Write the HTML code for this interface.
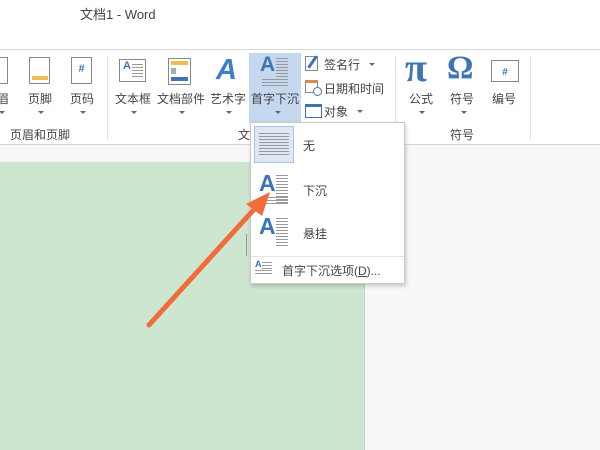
<!DOCTYPE html>
<html><head><meta charset="utf-8"><style>
*{margin:0;padding:0;box-sizing:border-box}
body{width:600px;height:450px;overflow:hidden;background:#f7f7f7;position:relative;font-family:"Liberation Sans","Noto Sans CJK SC",sans-serif;color:#444;font-size:12px}
.a{position:absolute}
.lbl{position:absolute;font-size:12px;color:#444;white-space:nowrap;transform:translateX(-50%)}
.dd{position:absolute;width:0;height:0;border-left:3px solid transparent;border-right:3px solid transparent;border-top:3px solid #666;transform:translateX(-50%)}
.sep{position:absolute;top:56px;width:1px;height:84px;background:#e2e2e2}
.lines{background:repeating-linear-gradient(#999 0 1px,transparent 1px 3px)}
</style></head><body>
<div class="a" style="left:0;top:0;width:600px;height:49px;background:#fff"></div>
<div class="a" style="left:80px;top:4px;font-size:13px;color:#444">文档1 - Word</div>
<div class="a" style="left:0;top:49px;width:600px;height:96px;background:#fff;border-top:1px solid #dadada;border-bottom:1px solid #d6d6d6"></div>

<div class="a" style="left:-12px;top:57px;width:20px;height:27px;border:1px solid #888;background:#fff"></div>
<div class="lbl" style="left:3px;top:90px">眉</div><div class="dd" style="left:2px;top:111px"></div>
<div class="a" style="left:29px;top:57px;width:21px;height:27px;border:1px solid #888;background:#fff"></div>
<div class="a" style="left:32px;top:76px;width:16px;height:4px;background:#eebb55"></div>
<div class="lbl" style="left:40px;top:90px">页脚</div><div class="dd" style="left:41px;top:111px"></div>
<div class="a" style="left:71px;top:57px;width:21px;height:27px;border:1px solid #888;background:#fff;color:#3d74b8;font-weight:bold;font-size:11px;text-align:center;line-height:22px">#</div>
<div class="lbl" style="left:82px;top:90px">页码</div><div class="dd" style="left:83px;top:111px"></div>
<div class="lbl" style="left:40px;top:126px">页眉和页脚</div>
<div class="sep" style="left:107px"></div>

<div class="a" style="left:119px;top:59px;width:27px;height:23px;border:1px solid #888;background:#fff"></div>
<div class="a" style="left:123px;top:60px;color:#3d74b8;font-weight:bold;font-size:11px">A</div>
<div class="a lines" style="left:132px;top:64px;width:11px;height:14px"></div>
<div class="lbl" style="left:133px;top:90px">文本框</div><div class="dd" style="left:134px;top:111px"></div>
<div class="a" style="left:168px;top:58px;width:23px;height:27px;border:1px solid #888;background:#fff"></div>
<div class="a" style="left:171px;top:61px;width:17px;height:4px;background:#eebb55"></div>
<div class="a" style="left:171px;top:68px;width:5px;height:6px;background:#aaa"></div>
<div class="a" style="left:171px;top:77px;width:17px;height:4px;background:#3d74b8"></div>
<div class="lbl" style="left:181px;top:90px">文档部件</div><div class="dd" style="left:182px;top:111px"></div>
<div class="a" style="left:216px;top:54px;font-size:29px;font-style:italic;font-weight:bold;color:#3d7fc6;font-family:'Liberation Sans',sans-serif">A</div>
<div class="lbl" style="left:228px;top:90px">艺术字</div><div class="dd" style="left:229px;top:111px"></div>
<div class="a" style="left:249px;top:53px;width:52px;height:70px;background:#c5d8f0"></div>
<div class="a" style="left:260px;top:53px;font-size:21px;font-weight:bold;color:#3d74b8">A</div>
<div class="a lines" style="left:276px;top:58px;width:12px;height:28px"></div>
<div class="a lines" style="left:262px;top:79px;width:26px;height:8px"></div>
<div class="lbl" style="left:275px;top:90px">首字下沉</div><div class="dd" style="left:278px;top:111px"></div>
<div class="lbl" style="left:244px;top:126px">文</div>
<div class="a" style="left:305px;top:56px;width:13px;height:15px;border:1px solid #888;background:#fff"></div>
<div class="a" style="left:311px;top:55px;width:3px;height:14px;background:#3d74b8;transform:rotate(35deg)"></div>
<div class="a" style="left:324px;top:56px;font-size:12px">签名行</div><div class="dd" style="left:372px;top:63px"></div>
<div class="a" style="left:305px;top:80px;width:13px;height:13px;border:1px solid #888;background:#fff;border-top:3px solid #d85"></div>
<div class="a" style="left:313px;top:87px;width:9px;height:9px;border:1px solid #3d74b8;border-radius:50%;background:#fff"></div>
<div class="a" style="left:324px;top:80px;font-size:12px">日期和时间</div>
<div class="a" style="left:305px;top:104px;width:17px;height:14px;border:1px solid #3d74b8;border-top:3px solid #3d74b8;background:#fff"></div>
<div class="a" style="left:324px;top:103px;font-size:12px">对象</div><div class="dd" style="left:360px;top:110px"></div>
<div class="sep" style="left:395px"></div>
<div class="a" style="left:405px;top:44px;font-size:40px;font-weight:bold;color:#3d74b8;font-family:'Liberation Serif',serif">π</div>
<div class="lbl" style="left:421px;top:90px">公式</div><div class="dd" style="left:422px;top:111px"></div>
<div class="a" style="left:447px;top:50px;font-size:33px;font-weight:bold;color:#3d74b8;font-family:'Liberation Serif',serif">Ω</div>
<div class="lbl" style="left:462px;top:90px">符号</div><div class="dd" style="left:464px;top:111px"></div>
<div class="a" style="left:491px;top:60px;width:28px;height:22px;border:1px solid #888;background:#fff;color:#3d74b8;font-size:10px;font-weight:bold;text-align:center;line-height:24px">#</div>
<div class="lbl" style="left:504px;top:90px">编号</div>
<div class="lbl" style="left:462px;top:126px">符号</div>
<div class="sep" style="left:530px"></div>

<div class="a" style="left:0;top:162px;width:365px;height:288px;background:#cde6d0;border-right:1px solid #c4d4c6"></div>
<div class="a" style="left:246px;top:234px;width:1px;height:22px;background:#999"></div>

<div class="a" style="left:250px;top:122px;width:155px;height:162px;background:#fff;border:1px solid #c8c8c8;box-shadow:1px 2px 4px rgba(0,0,0,.2)"></div>
<div class="a" style="left:254px;top:126px;width:40px;height:37px;background:#dde7f5;border:1px solid #a9c1e2"></div>
<div class="a lines" style="left:259px;top:133px;width:30px;height:24px"></div>
<div class="a" style="left:303px;top:137px;font-size:12px">无</div>
<div class="a" style="left:259px;top:170px;font-size:23px;font-weight:bold;color:#3d74b8">A</div>
<div class="a lines" style="left:276px;top:175px;width:12px;height:30px"></div>
<div class="a lines" style="left:260px;top:197px;width:28px;height:8px"></div>
<div class="a" style="left:303px;top:182px;font-size:12px">下沉</div>
<div class="a" style="left:259px;top:213px;font-size:23px;font-weight:bold;color:#3d74b8">A</div>
<div class="a lines" style="left:276px;top:218px;width:12px;height:30px"></div>
<div class="a" style="left:303px;top:225px;font-size:12px">悬挂</div>
<div class="a" style="left:251px;top:256px;width:153px;height:1px;background:#e2e2e2"></div>
<div class="a" style="left:255px;top:259px;font-size:9px;font-weight:bold;color:#3d74b8">A</div>
<div class="a lines" style="left:262px;top:262px;width:10px;height:8px"></div>
<div class="a lines" style="left:255px;top:270px;width:17px;height:6px"></div>
<div class="a" style="left:282px;top:262px;font-size:12px">首字下沉选项(<u>D</u>)...</div>

<svg class="a" style="left:0;top:0" width="600" height="450">
<line x1="149" y1="325" x2="258" y2="205" stroke="#f26b3a" stroke-width="5" stroke-linecap="round"/>
<polygon points="270,192 246,204 262,216" fill="#f26b3a"/>
</svg>
</body></html>
